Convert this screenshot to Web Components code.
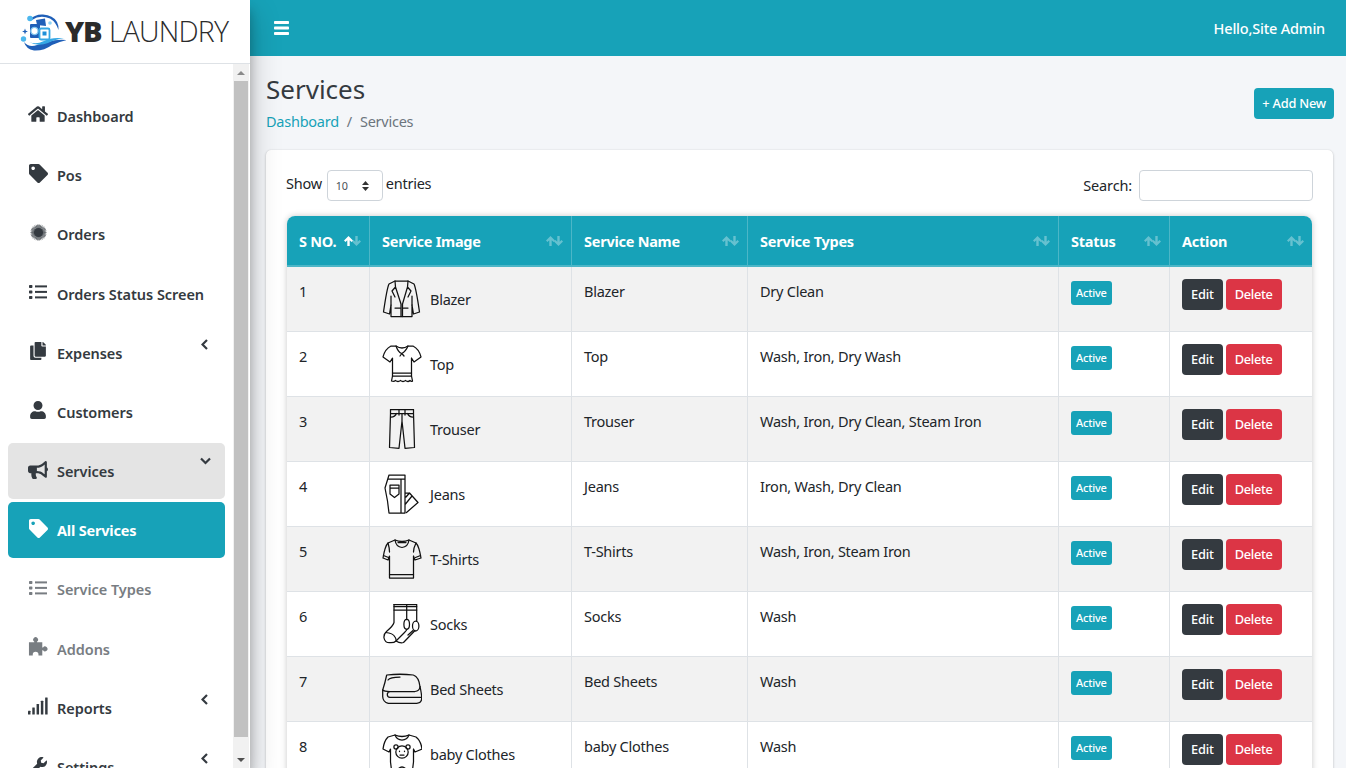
<!DOCTYPE html>
<html lang="en"><head><meta charset="utf-8"><title>Services</title>
<style>
html,body{margin:0;height:100%;overflow:hidden;background:#f4f6f9}
body{font:14.5px/24px "Noto Sans","Open Sans",sans-serif;color:#212529}
</style></head><body>
<yb-app>
  <yb-sidebar slot="side"></yb-sidebar>
  <yb-topbar slot="top" greeting="Hello,Site Admin"></yb-topbar>
  <yb-page-header slot="main" title="Services"></yb-page-header>
  <yb-services-card slot="main"></yb-services-card>
</yb-app>
<script>
const ICONS={
home:['0 0 576 512','M280.37 148.26L96 300.11V464a16 16 0 0 0 16 16l112.06-.29a16 16 0 0 0 15.92-16V368a16 16 0 0 1 16-16h64a16 16 0 0 1 16 16v95.64a16 16 0 0 0 16 16.05L464 480a16 16 0 0 0 16-16V300L295.67 148.26a12.19 12.19 0 0 0-15.3 0zM571.6 251.47L488 182.56V44.05a12 12 0 0 0-12-12h-56a12 12 0 0 0-12 12v72.61L318.47 43a48 48 0 0 0-61 0L4.34 251.47a12 12 0 0 0-1.6 16.9l25.5 31A12 12 0 0 0 45.15 301l235.22-193.74a12.19 12.19 0 0 1 15.3 0L530.9 301a12 12 0 0 0 16.9-1.6l25.5-31a12 12 0 0 0-1.7-16.93z',20,18],
tag:['0 0 512 512','M0 252.118V48C0 21.49 21.49 0 48 0h204.118a48 48 0 0 1 33.941 14.059l211.882 211.882c18.745 18.745 18.745 49.137 0 67.882L293.823 497.941c-18.745 18.745-49.137 18.745-67.882 0L14.059 286.059A48 48 0 0 1 0 252.118zM112 64c-26.51 0-48 21.49-48 48s21.49 48 48 48 48-21.49 48-48-21.49-48-48-48z',19,19],
copy:['0 0 448 512','M320 448v40c0 13.255-10.745 24-24 24H24c-13.255 0-24-10.745-24-24V120c0-13.255 10.745-24 24-24h72v296c0 30.879 25.121 56 56 56h168zm0-344V0H152c-13.255 0-24 10.745-24 24v368c0 13.255 10.745 24 24 24h272c13.255 0 24-10.745 24-24V128H344c-13.2 0-24-10.8-24-24zm120.971-31.029L375.029 7.029A24 24 0 0 0 358.059 0H352v96h96v-6.059a24 24 0 0 0-7.029-16.97z',16,18],
user:['0 0 448 512','M224 256c70.7 0 128-57.3 128-128S294.7 0 224 0 96 57.3 96 128s57.3 128 128 128zm89.6 32h-16.7c-22.2 10.2-46.9 16-72.9 16s-50.6-5.8-72.9-16h-16.7C60.2 288 0 348.2 0 422.4V464c0 26.5 21.5 48 48 48h352c26.5 0 48-21.5 48-48v-41.6c0-74.2-60.2-134.4-134.4-134.4z',16,18],
bullhorn:['0 0 576 512','M576 240c0-23.63-12.95-44.04-32-55.12V32.01C544 23.26 537.02 0 512 0c-7.12 0-14.19 2.38-19.98 7.02l-85.03 68.03C364.28 109.19 310.66 128 256 128H64c-35.35 0-64 28.65-64 64v96c0 35.35 28.65 64 64 64h33.7c-1.39 10.48-2.18 21.14-2.18 32 0 39.77 9.26 77.35 25.56 110.94 5.19 10.69 16.52 17.06 28.4 17.06h74.28c26.05 0 41.69-29.84 25.9-50.56-16.4-21.52-26.15-48.36-26.15-77.44 0-11.11 1.62-21.79 4.41-32H256c54.66 0 108.28 18.81 150.98 52.95l85.03 68.03a32.023 32.023 0 0 0 19.98 7.02c24.92 0 32-22.78 32-32V295.13C563.05 284.04 576 263.63 576 240zm-96 141.42l-33.05-26.44C392.95 311.78 325.12 288 256 288v-96c69.12 0 136.95-23.78 190.95-66.98L480 98.58v282.84z',20,18],
wrench:['0 0 512 512','M507.73 109.1c-2.24-9.03-13.54-12.09-20.12-5.51l-74.36 74.36-67.88-11.31-11.31-67.88 74.36-74.36c6.62-6.62 3.43-17.9-5.66-20.16-47.38-11.74-99.55.91-136.58 37.93-39.64 39.64-50.55 97.1-34.05 147.2L18.74 402.76c-24.99 24.99-24.99 65.51 0 90.5 24.99 24.99 65.51 24.99 90.5 0l213.21-213.21c50.12 16.71 107.47 5.68 147.37-34.22 37.07-37.07 49.7-89.32 37.91-136.73zM64 472c-13.25 0-24-10.75-24-24 0-13.26 10.75-24 24-24s24 10.74 24 24c0 13.25-10.75 24-24 24z',18,18]
};
const burst=()=>{let l='';for(let i=0;i<30;i++){const a=i*Math.PI/15;l+=`<line x1="8" y1="8" x2="${(8+7.6*Math.cos(a)).toFixed(2)}" y2="${(8+7.6*Math.sin(a)).toFixed(2)}"/>`}
 return `<svg width="17" height="17" viewBox="0 0 16 16" fill="currentColor"><path d="M8 .4L14.600 4.200V11.800L8 15.600L1.400 11.800V4.200Z" fill="#a9acaf"/><g stroke="currentColor" stroke-width=".55">${l}</g><circle cx="8" cy="8" r="4.300"/></svg>`};
function iconSvg(n){
 if(ICONS[n]){const[v,d,w,h]=ICONS[n];return `<svg width="${w}" height="${h}" viewBox="${v}" fill="currentColor"><path d="${d}"/></svg>`}
 if(n==='list')return `<svg width="18" height="14" viewBox="0 0 18 14" fill="currentColor"><rect y="0" width="3.4" height="3" rx=".7"/><rect y="5.4" width="3.4" height="3" rx=".7"/><rect y="11" width="3.4" height="3" rx=".7"/><rect x="6" y=".4" width="12" height="2"/><rect x="6" y="5.9" width="12" height="2"/><rect x="6" y="11.4" width="12" height="2"/></svg>`;
 if(n==='burst')return burst();
 if(n==='puzzle')return `<svg width="21" height="20" viewBox="0 0 21 20" fill="currentColor"><path fill-rule="evenodd" d="M1 5H6.6V4.4A2.5 2.5 0 1 1 9.4 4.4V5H15V10.6H15.8A2.5 2.5 0 1 1 15.8 13.4H15V19H11V18A3 3 0 0 0 5 18V19H1Z"/></svg>`;
 if(n==='signal')return `<svg width="21" height="18" viewBox="0 0 21 18" fill="currentColor"><rect y="14" width="2.6" height="4" rx=".4"/><rect x="4.5" y="10.5" width="2.6" height="7.5" rx=".4"/><rect x="9" y="7" width="2.6" height="11" rx=".4"/><rect x="13.5" y="3.5" width="2.6" height="14.5" rx=".4"/><rect x="18" width="2.6" height="18" rx=".4"/></svg>`;
 return '';
}
const CLOTHES={
blazer:`<path d="M13 2H26L32 5Q34 9 37.5 33L31.5 35L30 26V37.5H9V26L7.5 35L1.5 33Q5 9 7 5Z"/><path d="M13 2L13.5 8L19 25V37.5M26 2L25.5 8L20.5 25V37.5M13.5 8L10 12L13 18M25.5 8L29 12L26 18M9 26L9 17M30 26V17M13 29H18M21.5 29H26"/>`,
top:`<path d="M14 2Q20 6 26 2L31 2Q37 5 39 13L32 18L29.5 14V32H10.5V14L8 18L1 13Q3 5 9 2Z"/><path d="M14 2Q16 8 19.5 9.5Q23.5 8 26 2M18 12L19.8 9.5L22 12M10.5 29H29.5M10.5 32L9.5 37Q12 38 13.5 36.5Q16 38.5 18.5 36.5Q21 38.500 23.5 36.5Q26 38.5 28 36.5Q29.5 38 30.5 37L29.5 32"/>`,
trouser:`<path d="M8.5 .5H31.5V4.5L32.500 38.500L23 39.300L20 12L17 39.300L7.500 38.500L8.500 4.500ZM8.500 4.500H31.500M17 .5V6M23 .5V6M20 4.500V12M9 8Q13 8 14.500 4.500M31 8Q27 8 25.500 4.500"/>`,
jeans:`<path d="M7 1H23V39H7L5.5 27L3 14ZM6.500 5H23M19 5V39M8 11H17V20L12.5 23.5L8 20ZM8 14H17M23 19H27.5L36 28.5L24.5 38.5M27.5 19L24 23M30 22L23.5 30"/>`,
tshirt:`<path d="M13 1Q20 4 27 1L34 4Q37 7 39 19L33 21L31.5 17V39H7.5V17L6 21L1 19Q3 7 6 4Z"/><path d="M13 1Q14 8 20 8.5Q26 8 27 1M16 3.5H24M7.5 35.5H31.5M1.5 16.5L6.5 18.5M38.5 16.5L33.5 18.5M7.5 13Q7.5 9 6 4M31.5 13Q31.5 9 34 4"/>`,
socks:`<path d="M12 .5H34.700V17"/><path d="M12 .5V18.500Q11 22 5 27Q1.500 30 2 34Q3 39 8 38.700Q12 39 14 37L22.500 28.500Q25 26 25 25"/><path d="M12 2.500H34.700M12 6H34.700M24.700 .5V15.500"/><ellipse cx="24.700" cy="20.300" rx="2.800" ry="5"/><ellipse cx="33.700" cy="22" rx="3.200" ry="5"/><path d="M3.500 28.500Q11 29 13 33Q14.500 35.500 14 37M14 37Q18 39.500 21.500 38.500L33 26.500M31 26.500L26 31"/>`,
sheets:`<path d="M4.700 6Q3 14 .7 21V27.700Q1 33 6.300 34.300H34.700Q39.700 34 39.700 29.300Q39.700 25 38 17.700Q37 8 31.300 6Q18 4.500 4.700 6Z"/><path d="M6 11Q8 8 18 8M.7 21Q2 22.500 8 22.500H33Q37.500 22 38 17.700M8 22.700Q5.300 23 5.300 25.500Q5.300 28.300 8 28.300H39"/>`,
baby:`<path d="M13 1Q20 4 27 1L34 3Q39 7 40 15L33 18L31.5 15V28L30 40H10L8.5 28V15L7 18L1 15Q2 7 6 3Z"/><path d="M13 1Q15 6 20 6Q25 6 27 1"/><circle cx="20" cy="18" r="6.2"/><circle cx="14" cy="13" r="2.1"/><circle cx="26" cy="13" r="2.1"/><path d="M18 21H22M17.5 17V17.6M22.5 17V17.6M16 35Q20 31 24 35"/>`
};
customElements.define('yb-icon',class extends HTMLElement{connectedCallback(){
 const s=this.attachShadow({mode:'open'});
 s.innerHTML=`<style>:host{display:flex;width:20px;height:20px;align-items:center;justify-content:center;flex:none}svg{display:block}</style>${iconSvg(this.getAttribute('name'))}`;
}});
customElements.define('yb-garment',class extends HTMLElement{connectedCallback(){
 const s=this.attachShadow({mode:'open'});
 s.innerHTML=`<style>:host{display:block;width:40px;height:40px;flex:none}svg{display:block;overflow:hidden}</style><svg width="40" height="40" viewBox="0 0 40 40" fill="none" stroke="#111" stroke-width="1.25" stroke-linejoin="round" stroke-linecap="round">${CLOTHES[this.getAttribute('name')]}</svg>`;
}});
customElements.define('yb-app',class extends HTMLElement{constructor(){super();
 this.attachShadow({mode:'open'}).innerHTML=`<style>
 :host{display:grid;grid-template-columns:250px 1fr;grid-template-rows:56px 1fr;height:768px;overflow:hidden;letter-spacing:-.25px}
 .side{grid-row:1/3;position:relative;z-index:2;background:#fff;box-shadow:0 14px 28px rgba(0,0,0,.25),0 10px 10px rgba(0,0,0,.22);min-height:0;overflow:hidden;letter-spacing:-.05px}
 .main{padding:16px 13px 0 16px;min-width:0;overflow:hidden}
 </style><div class="side"><slot name="side"></slot></div><div><slot name="top"></slot></div><div class="main"><slot name="main"></slot></div>`;
}});
customElements.define('yb-logo',class extends HTMLElement{constructor(){super();
 this.attachShadow({mode:'open'}).innerHTML=`<style>
 :host{display:flex;align-items:center;height:63px;padding:0 0 2px 20px;box-sizing:border-box;font-family:"Open Sans","Noto Sans",sans-serif;color:#2b2b2b;white-space:nowrap;overflow:hidden}
 svg{flex:none;display:block;margin-top:2px}
 b{font-weight:800;font-size:29px;letter-spacing:-1.2px;margin-left:-1px}
 span{font-weight:300;font-size:28.5px;letter-spacing:-.8px;margin-left:7.500px}
 </style>
 <svg width="46" height="40" viewBox="0 0 46 40" fill="none">
  <path d="M9 8Q15 2 23 2.500Q33 3 37 10Q39 14 38.500 18Q36 10 30 6.500Q20 2.500 12 8Z" fill="#1f5fb8"/>
  <path d="M4 30Q9 36 17 33Q22 31 28 30Q36 27 47 28Q38 30 32 33Q24 39 14 38.500Q6 37 4 30Z" fill="#1f5fb8"/>
  <path d="M9 30Q16 33 24 29Q32 25 44 26.500Q35 27 28 31Q18 35 9 30Z" fill="#35a7e4"/>
  <rect x="10" y="12" width="10" height="14" rx="1" fill="#1f5fb8"/>
  <circle cx="14.500" cy="19" r="3.600" fill="#fff" stroke="#7fc6ee" stroke-width="1.400"/>
  <path d="M16 8L25 6.500L26 14L17 13Z" fill="#1f5fb8"/>
  <rect x="19.500" y="16.500" width="10" height="11" rx="1.500" fill="#fff" stroke="#35a7e4" stroke-width="1.800"/>
  <rect x="22.500" y="19.500" width="4" height="4" fill="#1f8fd8"/>
  <circle cx="10" cy="6.500" r="2.800" fill="#4cb7ee"/><circle cx="3.500" cy="27" r="2.700" fill="#4cb7ee"/>
  <circle cx="30" cy="11" r="1.800" fill="#8fd3f5"/><path d="M5 16.500L5.800 18.700L8 19.500L5.800 20.300L5 22.500L4.200 20.300L2 19.500L4.200 18.700Z" fill="#1f5fb8"/>
 </svg><b>YB</b><span>LAUNDRY</span>`;
}});
customElements.define('yb-nav-item',class extends HTMLElement{connectedCallback(){
 const caret=this.getAttribute('caret');
 const c=caret==='left'?'M6 1L1.500 5.500L6 10':'M1 1.500L5.500 6L10 1.500';
 this.attachShadow({mode:'open'}).innerHTML=`<style>
 :host{display:flex;align-items:center;height:56.2px;margin-bottom:3px;padding-left:20px;border-radius:5px;font-weight:600;color:#343a40;box-sizing:border-box;position:relative;white-space:nowrap}
 :host([state=open]){background:#e4e4e4;color:#343a40}
 :host([state=active]){background:#17a2b8;color:#fff;font-weight:700;letter-spacing:-.2px}
 :host([state=sub]){color:#787d82}
 yb-icon{margin:-3px 9px 0 0}
 .c{position:absolute;left:${caret==='left'?193:192}px;top:14px;display:block}
 </style><yb-icon name="${this.getAttribute('icon')}"></yb-icon><slot></slot>${caret?`<svg class="c" width="11" height="11" viewBox="0 0 11 11" fill="none" stroke="currentColor" stroke-width="2.2"><path d="${c}"/></svg>`:''}`;
}});
customElements.define('yb-scrollbar',class extends HTMLElement{constructor(){super();
 this.attachShadow({mode:'open'}).innerHTML=`<style>
 :host{display:flex;flex-direction:column;width:16px;flex:none;background:#f1f1f1;align-items:center;box-sizing:border-box}
 .a{height:17px;display:flex;align-items:center;justify-content:center;flex:none}
 .t{width:14px;flex:1;background:#c1c1c1}
 i{width:0;height:0;border:4px solid transparent}
 .u{border-top:0;border-bottom:4px solid #8a8a8a}.d{border-bottom:0;border-top:4px solid #505050}
 .gap{height:14px;flex:none}
 </style><div class="a"><i class="u"></i></div><div class="t"></div><div class="gap"></div><div class="a"><i class="d"></i></div>`;
}});
customElements.define('yb-sidebar',class extends HTMLElement{constructor(){super();
 const items=[['home','Dashboard'],['tag','Pos'],['burst','Orders'],['list','Orders Status Screen'],['copy','Expenses','','left'],['user','Customers'],['bullhorn','Services','open','down'],['tag','All Services','active'],['list','Service Types','sub'],['puzzle','Addons','sub'],['signal','Reports','','left'],['wrench','Settings','','left']];
 this.attachShadow({mode:'open'}).innerHTML=`<style>
 :host{display:flex;flex-direction:column;height:768px;overflow:hidden}
 yb-logo{border-bottom:1px solid #dee2e6;height:64px}
 .body{flex:1;display:flex;min-height:0}
 nav{width:217px;margin-left:8px;padding-top:23.900px;box-sizing:border-box;flex:none;overflow:hidden;height:704px}
 .sp{width:8px;flex:none}
 .end{width:1px;flex:none}
 </style><yb-logo></yb-logo><div class="body"><nav>${items.map(i=>`<yb-nav-item icon="${i[0]}" ${i[2]?`state="${i[2]}"`:''} ${i[3]?`caret="${i[3]}"`:''}>${i[1]}</yb-nav-item>`).join('')}</nav><div class="sp"></div><yb-scrollbar></yb-scrollbar><div class="end"></div></div>`;
}});
customElements.define('yb-topbar',class extends HTMLElement{connectedCallback(){
 this.attachShadow({mode:'open'}).innerHTML=`<style>
 :host{display:flex;align-items:center;justify-content:space-between;height:56px;background:#17a2b8;color:#fff;padding:0 21px 0 24px;box-sizing:border-box}
 svg{display:block}span{font-weight:500;letter-spacing:-.2px}
 </style><svg width="15" height="14" viewBox="0 0 15 14" fill="#fff"><rect width="15" height="3" rx=".8"/><rect y="5.500" width="15" height="3" rx=".8"/><rect y="11" width="15" height="3" rx=".8"/></svg><span>${this.getAttribute('greeting')}</span>`;
}});
customElements.define('yb-page-header',class extends HTMLElement{connectedCallback(){
 this.attachShadow({mode:'open'}).innerHTML=`<style>
 :host{display:flex;justify-content:space-between;align-items:flex-start;height:78px;margin-right:-1px}
 h1{margin:0;font-size:26px;font-weight:400;line-height:34px;color:#343a40;letter-spacing:0}
 .bc{margin-top:3px;display:flex;gap:8px;color:#6c757d}
 a{color:#17a2b8;text-decoration:none}
 .btn{margin-top:16px;background:#17a2b8;color:#fff;border-radius:4px;height:31px;line-height:30px;padding:0 8px;font-size:12.800px;font-weight:500;white-space:nowrap;letter-spacing:-.2px}
 </style><div><h1>${this.getAttribute('title')}</h1><div class="bc"><a href="#">Dashboard</a><span>/</span><span>Services</span></div></div><div class="btn">+ Add New</div>`;
}});
customElements.define('yb-badge',class extends HTMLElement{constructor(){super();
 this.attachShadow({mode:'open'}).innerHTML=`<style>:host{display:inline-block;background:#17a2b8;color:#fff;border-radius:3px;font-size:11px;font-weight:500;line-height:24px;height:24px;padding:0 5px;letter-spacing:-.2px}</style><slot></slot>`;
}});
customElements.define('yb-btn',class extends HTMLElement{constructor(){super();
 this.attachShadow({mode:'open'}).innerHTML=`<style>:host{display:inline-block;background:#343a40;color:#fff;border-radius:4px;font-size:12.800px;font-weight:500;line-height:31px;height:31px;padding:0 9px}:host([kind=danger]){background:#dc3545}</style><slot></slot>`;
}});
customElements.define('yb-services-card',class extends HTMLElement{constructor(){super();
 const rows=[['Blazer','blazer','Dry Clean'],['Top','top','Wash, Iron, Dry Wash'],['Trouser','trouser','Wash, Iron, Dry Clean, Steam Iron'],['Jeans','jeans','Iron, Wash, Dry Clean'],['T-Shirts','tshirt','Wash, Iron, Steam Iron'],['Socks','socks','Wash'],['Bed Sheets','sheets','Wash'],['baby Clothes','baby','Wash']];
 const heads=['S NO.','Service Image','Service Name','Service Types','Status','Action'];
 const arrows=on=>`<svg width="17" height="10" viewBox="0 0 17 10"><path fill="${on?'#fff':'rgba(255,255,255,.34)'}" d="M4.500 0L9 4.600L7.500 6L5.700 4.200V10H3.300V4.200L1.500 6L0 4.600Z"/><path fill="rgba(255,255,255,.34)" d="M12.500 10L17 5.400L15.500 4L13.700 5.800V0H11.300V5.800L9.500 4L8 5.400Z"/></svg>`;
 this.attachShadow({mode:'open'}).innerHTML=`<style>
 :host{display:block;background:#fff;border-radius:5px;padding:20px 20px 0;box-shadow:0 0 1px rgba(0,0,0,.125),0 1px 3px rgba(0,0,0,.2);height:700px;box-sizing:border-box}
 .bar{display:flex;justify-content:space-between;height:46px;align-items:flex-start}
 .len{display:flex;align-items:flex-start;line-height:27px}
 .sel{display:flex;align-items:center;justify-content:space-between;width:56px;height:31px;box-sizing:border-box;border:1px solid #ced4da;border-radius:4px;margin:0 3px 0 5px;padding:0 12px 0 8px;font-size:10.800px;color:#495057;background:#fff}
 .sel svg{display:block}
 .srch{display:flex;line-height:31px;gap:7px;letter-spacing:-.15px}
 input{width:174px;height:31px;box-sizing:border-box;border:1px solid #ced4da;border-radius:4px;background:#fff;padding:0;margin:0;outline:0}
 .wrap{margin:0 1px;border-radius:8px 8px 0 0;box-shadow:0 0 6px rgba(0,0,0,.22);overflow:hidden}
 table{border-collapse:separate;border-spacing:0;table-layout:fixed;width:1025px}
 th{background:#17a2b8;color:#fff;height:51px;box-sizing:border-box;padding:0 8px 0 12px;font-weight:700;text-align:left;border-right:1px solid #4cb6c7;border-bottom:2px solid #4cb6c7}
 th:last-child,td:last-child{border-right:0}
 .h{display:flex;justify-content:space-between;align-items:center;margin-top:1px}
 .h svg{display:block;flex:none;margin-top:-1px}
 td{height:65px;box-sizing:border-box;padding:12px 12px 0;vertical-align:top;border-right:1px solid #dee2e6;border-bottom:1px solid #dee2e6;white-space:nowrap;color:#212529}
 tr:nth-child(odd) td{background:#f2f2f2}
 .im{display:flex;align-items:center;gap:8px}
 .acts{display:flex;gap:3px}
 yb-btn{letter-spacing:-.2px}
 yb-btn[kind=danger]{letter-spacing:-.3px}
 td.b{padding-top:12px}
 </style>
 <div class="bar"><div class="len">Show<div class="sel" role="combobox">10<svg width="9" height="12" viewBox="0 0 9 12" fill="#333"><path d="M4.500 1L8 5H1ZM4.500 11L1 7H8Z"/></svg></div>entries</div><div class="srch">Search:<input aria-label="Search"></div></div>
 <div class="wrap"><table><colgroup><col style="width:83px"><col style="width:202px"><col style="width:176px"><col style="width:311px"><col style="width:111px"><col style="width:142px"></colgroup>
 <thead><tr>${heads.map((h,i)=>`<th><div class="h"><span>${h}</span>${arrows(i==0)}</div></th>`).join('')}</tr></thead>
 <tbody>${rows.map((r,i)=>`<tr><td>${i+1}</td><td><div class="im"><yb-garment name="${r[1]}"></yb-garment>${r[0]}</div></td><td>${r[0]}</td><td>${r[2]}</td><td class="b"><yb-badge>Active</yb-badge></td><td><div class="acts"><yb-btn>Edit</yb-btn><yb-btn kind="danger">Delete</yb-btn></div></td></tr>`).join('')}</tbody></table></div>`;
}});
</script></body></html>
